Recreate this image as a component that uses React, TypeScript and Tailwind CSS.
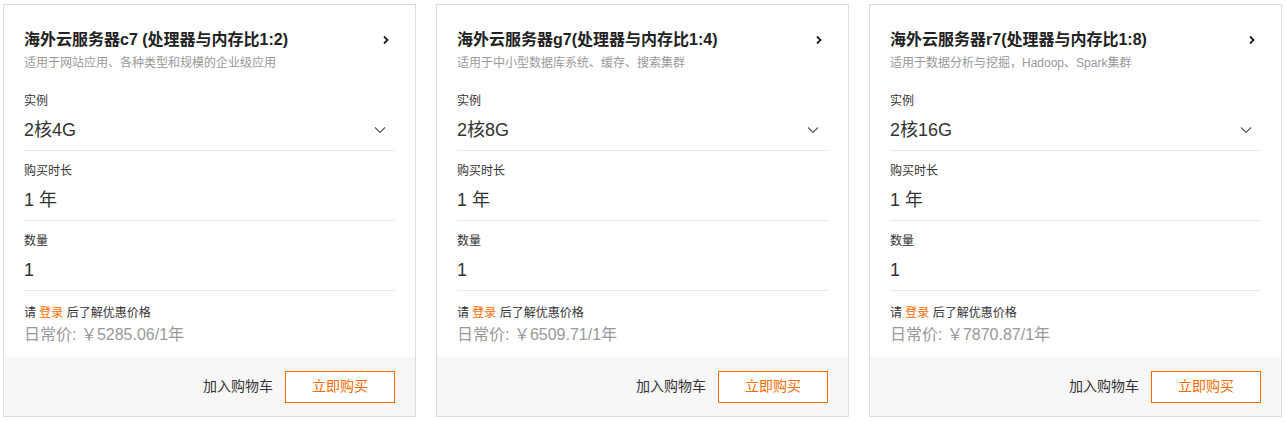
const products = [
  {
    title: "海外云服务器c7 (处理器与内存比1:2)",
    desc: "适用于网站应用、各种类型和规模的企业级应用",
    spec: "2核4G",
    price: "5285.06",
  },
  {
    title: "海外云服务器g7(处理器与内存比1:4)",
    desc: "适用于中小型数据库系统、缓存、搜索集群",
    spec: "2核8G",
    price: "6509.71",
  },
  {
    title: "海外云服务器r7(处理器与内存比1:8)",
    desc: "适用于数据分析与挖掘，Hadoop、Spark集群",
    spec: "2核16G",
    price: "7870.87",
  },
];

const font = { fontFamily: '"Liberation Sans", "Noto Sans CJK SC", sans-serif' };

const ChevronRight = () => (
  <svg width="8" height="10" viewBox="0 0 8 10" className="mr-[5px]">
    <path d="M2 1.5 L5.5 5 L2 8.5" fill="none" stroke="#222" strokeWidth="1.8" />
  </svg>
);

const ChevronDown = () => (
  <svg width="12" height="8" viewBox="0 0 12 8" className="mr-[9px]">
    <path d="M1 1.5 L6 6.5 L11 1.5" fill="none" stroke="#555" strokeWidth="1.1" />
  </svg>
);

const Field = ({ label, children }: { label: string; children: React.ReactNode }) => (
  <div className="border-b border-[#e8e8e8] pt-[10px] pb-[8px]">
    <div className="h-5 text-[12px] leading-5 text-[#333]">{label}</div>
    <div className="mt-[7px] h-6 text-[18px] leading-6 text-[#333]">{children}</div>
  </div>
);

const Card = ({ p }: { p: (typeof products)[number] }) => (
  <div className="flex h-[413px] w-[413px] flex-col border border-[#dcdcdc] bg-white">
    <div className="flex-1 px-5 pt-[23px]">
      <div className="flex h-6 items-center justify-between">
        <span className="text-[16px] font-bold leading-6 text-[#222]">{p.title}</span>
        <ChevronRight />
      </div>
      <div className="mt-px h-5 text-[12px] leading-5 text-[#999]">{p.desc}</div>
      <div className="mt-[8px]">
        <Field label="实例">
          <div className="flex items-center justify-between">
            <span>{p.spec}</span>
            <ChevronDown />
          </div>
        </Field>
        <Field label="购买时长">1 年</Field>
        <Field label="数量">1</Field>
        <div className="pt-[12px]">
          <div className="h-5 text-[12px] leading-5 text-[#333]">
            请 <span className="text-[#ff6a00]">登录</span> 后了解优惠价格
          </div>
          <div className="h-6 text-[16px] leading-6 text-[#999]">日常价: ￥{p.price}/1年</div>
        </div>
      </div>
    </div>
    <div className="flex h-[59px] items-center justify-end gap-3 bg-[#f7f7f7] px-5">
      <span className="text-[14px] text-[#333]">加入购物车</span>
      <button className="h-8 w-[110px] border border-[#ff6a00] bg-white text-[14px] text-[#ff6a00]">
        立即购买
      </button>
    </div>
  </div>
);

export default function App() {
  return (
    <div className="flex min-h-[422px] gap-5 bg-white pl-[3px] pt-[4px]" style={font}>
      {products.map((p) => (
        <Card key={p.spec} p={p} />
      ))}
    </div>
  );
}
